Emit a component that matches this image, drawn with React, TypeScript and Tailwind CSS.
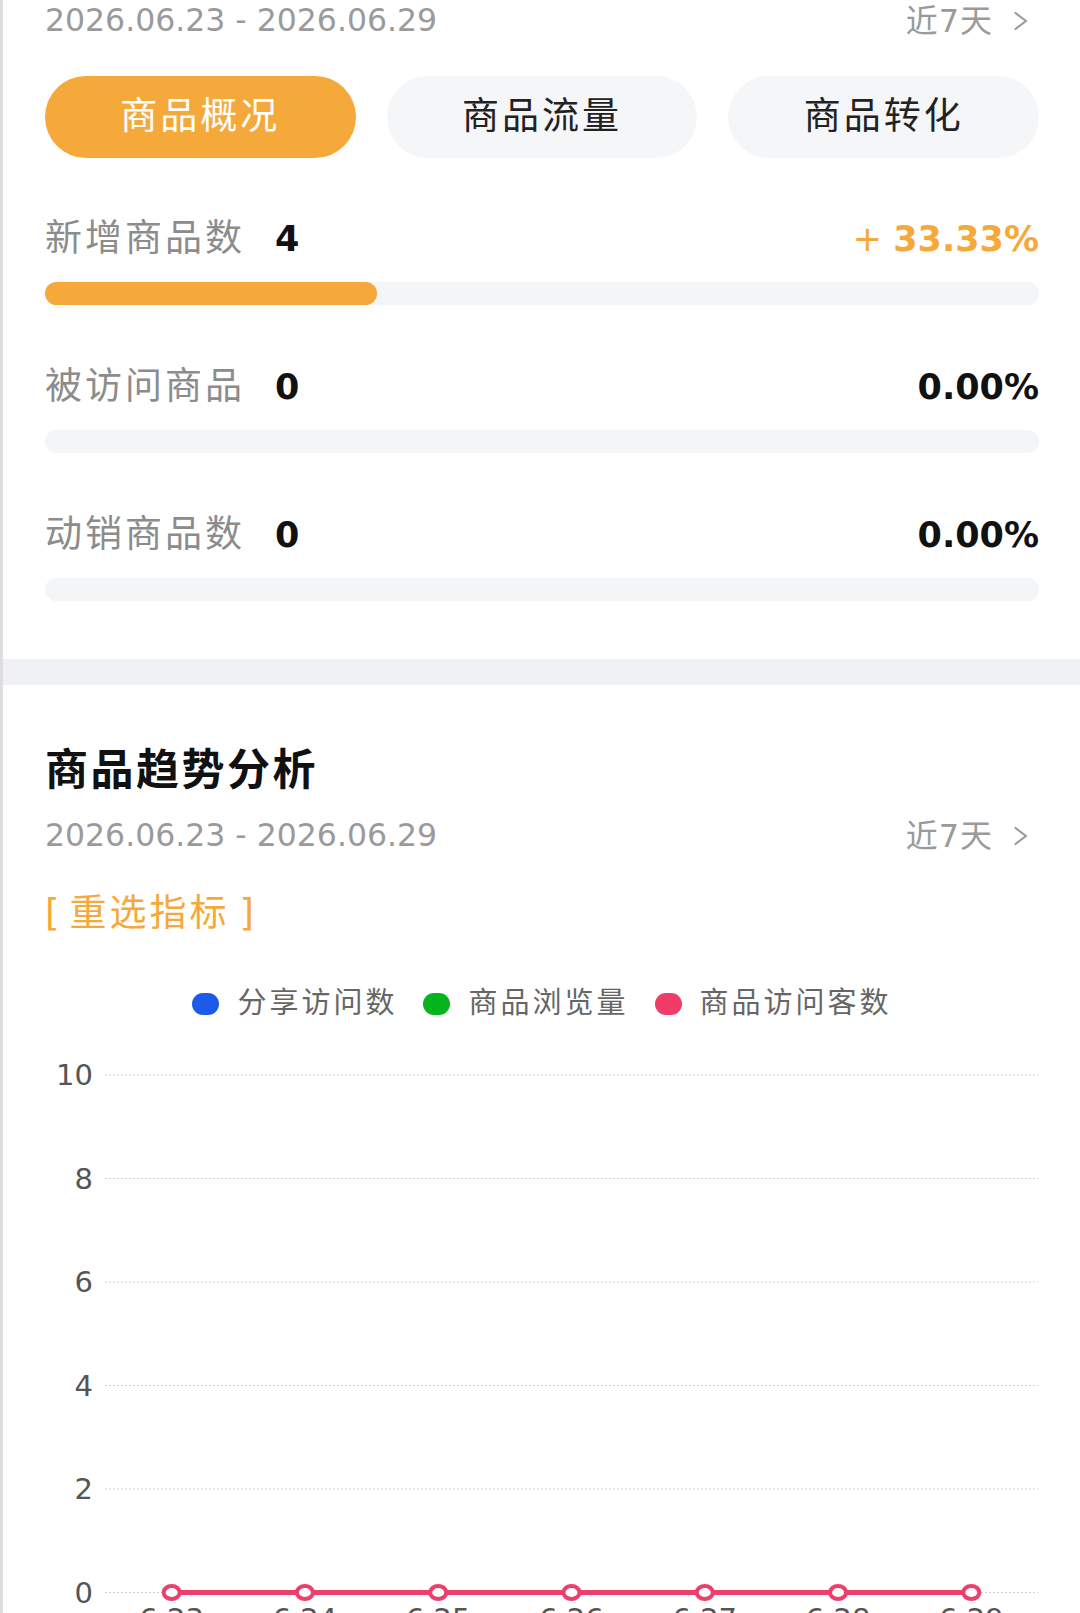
import React from "react";

type Stat = {
  label: string;
  value: string;
  rate: string;
  percent: number;
  up?: boolean;
};

const stats: Stat[] = [
  { label: "新增商品数", value: "4", rate: "33.33%", percent: 33.4, up: true },
  { label: "被访问商品", value: "0", rate: "0.00%", percent: 0 },
  { label: "动销商品数", value: "0", rate: "0.00%", percent: 0 },
];

const tabs = ["商品概况", "商品流量", "商品转化"];

const legend = [
  { name: "分享访问数", color: "bg-[#1c5bea]" },
  { name: "商品浏览量", color: "bg-[#05b31c]" },
  { name: "商品访问客数", color: "bg-[#f03c66]" },
];

const days = ["6.23", "6.24", "6.25", "6.26", "6.27", "6.28", "6.29"];

const DateRow = () => (
  <div className="flex h-[41px] items-center justify-between">
    <span className="text-[31.5px] leading-none text-[#9a9a9a]">
      2026.06.23 - 2026.06.29
    </span>
    <span className="mr-[10px] flex items-center gap-[20px] text-[32px] leading-none tracking-[1px] text-[#9a9a9a]">
      近7天
      <svg width="16" height="24" viewBox="0 0 16 24">
        <path
          d="M2.5 4 L13 12 L2.5 20"
          fill="none"
          stroke="#9a9a9a"
          strokeWidth="2.2"
          strokeLinecap="round"
          strokeLinejoin="round"
        />
      </svg>
    </span>
  </div>
);

const TrendChart = () => {
  const top = 39;
  const step = 103.5;
  const left = 60;
  const right = 993;
  const band = (right - left) / days.length;
  const zeroY = top + step * 5;
  const xs = days.map((_, i) => left + band * (i + 0.5));

  return (
    <svg width="994" height="620" className="mt-[14px] block">
      {[10, 8, 6, 4, 2, 0].map((v, i) => {
        const y = top + step * i;
        return (
          <g key={v}>
            <line
              x1={left}
              x2={right}
              y1={y}
              y2={y}
              stroke="#cfcfcf"
              strokeWidth="1"
              strokeDasharray="2 2"
            />
            <text
              x={48}
              y={y + 10}
              textAnchor="end"
              fontSize="29"
              fill="#555"
              fontFamily="'DejaVu Sans', sans-serif"
            >
              {v}
            </text>
          </g>
        );
      })}
      <line
        x1={xs[0]}
        x2={xs[xs.length - 1]}
        y1={zeroY}
        y2={zeroY}
        stroke="#ec3f6b"
        strokeWidth="5"
      />
      {xs.map((x) => (
        <ellipse
          key={x}
          cx={x}
          cy={zeroY}
          rx="8"
          ry="6.5"
          fill="#fff"
          stroke="#ec3f6b"
          strokeWidth="4"
        />
      ))}
      {days.map((d, i) => (
        <text
          key={d}
          x={xs[i]}
          y={zeroY + 36}
          textAnchor="middle"
          fontSize="29"
          fill="#555"
          fontFamily="'DejaVu Sans', sans-serif"
        >
          {d}
        </text>
      ))}
    </svg>
  );
};

export default function App() {
  return (
    <div className="h-[1613px] overflow-hidden border-l-[3px] border-[#dedede] bg-white font-['DejaVu_Sans','Noto_Sans_CJK_SC',sans-serif]">
      <section className="pl-[42px] pr-[41px]">
        <DateRow />

        <div className="mt-[35px] flex gap-[31px]">
          {tabs.map((t, i) => (
            <div
              key={t}
              className={
                i === 0
                  ? "flex h-[82px] flex-1 items-center justify-center rounded-full bg-[#f6a93b] text-[37px] tracking-[3px] text-white"
                  : "flex h-[82px] flex-1 items-center justify-center rounded-full bg-[#f4f6f8] text-[37px] tracking-[3px] text-[#222]"
              }
            >
              {t}
            </div>
          ))}
        </div>

        {stats.map((s, i) => (
          <div key={s.label} className={i === 0 ? "mt-[56px]" : "mt-[57px]"}>
            <div className="flex h-[50px] items-center justify-between">
              <div className="flex items-center">
                <span className="text-[37px] tracking-[3px] text-[#8c8c8c]">
                  {s.label}
                </span>
                <span className="ml-[30px] text-[35px] font-bold text-[#111]">
                  {s.value}
                </span>
              </div>
              {s.up ? (
                <span className="text-[35px] font-bold text-[#f6a93b]">
                  <span className="font-normal">+ </span>
                  {s.rate}
                </span>
              ) : (
                <span className="text-[35px] font-bold text-[#111]">
                  {s.rate}
                </span>
              )}
            </div>
            <div className="mt-[18px] h-[23px] rounded-full bg-[#f3f5f7]">
              <div
                className="h-full rounded-full bg-[#f6a93b]"
                style={{ width: `${s.percent}%` }}
              />
            </div>
          </div>
        ))}
      </section>

      <div className="mt-[58px] h-[26px] bg-[#eff1f4]" />

      <section className="pl-[42px] pr-[41px]">
        <h2 className="mt-[60px] flex h-[50px] items-center text-[43px] font-bold tracking-[2.5px] text-[#111]">
          商品趋势分析
        </h2>
        <div className="mt-[20px]">
          <DateRow />
        </div>
        <div className="mt-[36px] flex h-[44px] items-center text-[37px] text-[#f6a93b]">
          <span>[</span>
          <span className="mx-[10px] tracking-[3px]">重选指标</span>
          <span>]</span>
        </div>

        <div className="mt-[50px] flex h-[36px] items-center justify-center">
          {legend.map((l) => (
            <div key={l.name} className="mr-[26px] flex items-center last:mr-0">
              <span className={`h-[22px] w-[27px] rounded-full ${l.color}`} />
              <span className="ml-[18px] text-[29px] tracking-[3px] text-[#666]">
                {l.name}
              </span>
            </div>
          ))}
        </div>

        <TrendChart />
      </section>
    </div>
  );
}
